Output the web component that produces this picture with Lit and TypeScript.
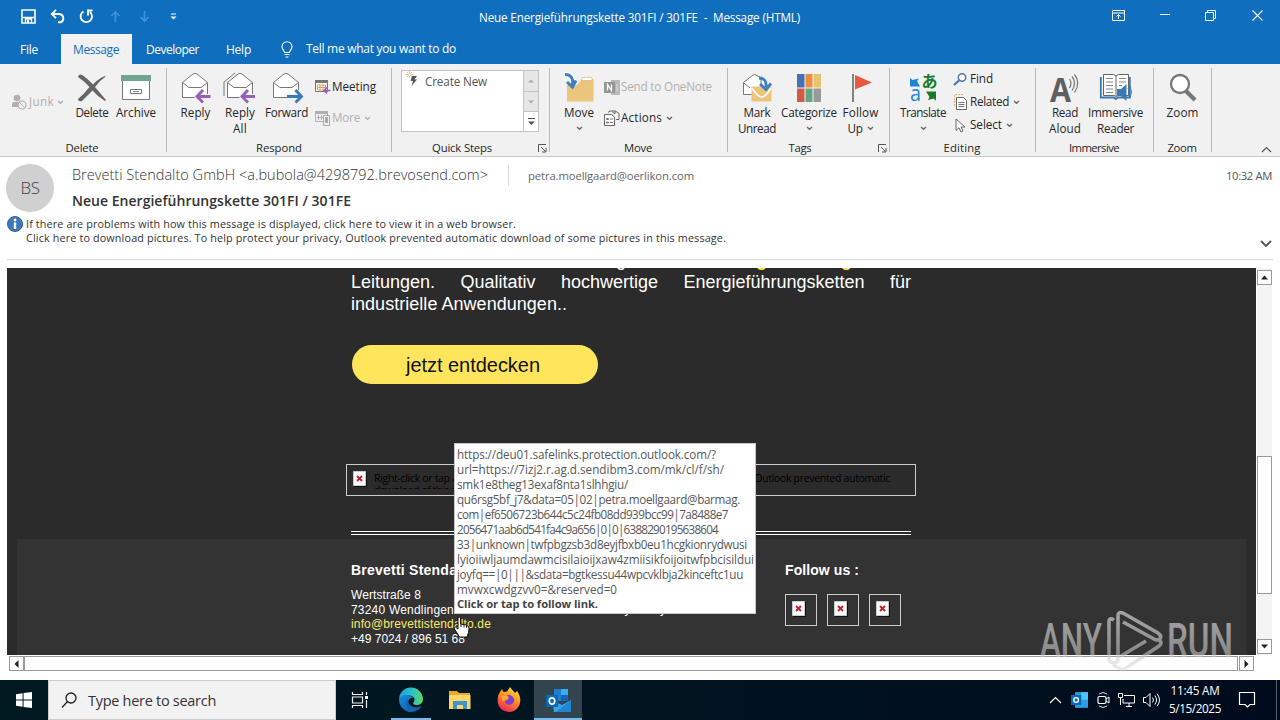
import {LitElement, css, html, svg} from 'lit';
import {customElement, property} from 'lit/decorators.js';

// Text that is tracked in or out so that it fills exactly `width` pixels.
@customElement('fit-text')
export class FitText extends LitElement {
  @property({type: Number}) width = 0;

  static styles = css`
    :host {
      display: inline-block;
      white-space: pre;
      text-align: left;
    }

    span {
      display: inline-block;
    }
  `;

  updated() {
    const count = (this.textContent || '').length;
    const run = this.renderRoot.querySelector('span');
    this.style.letterSpacing = '0px';
    if (!run || !count || !this.width) return;
    const natural = run.getBoundingClientRect().width;
    this.style.letterSpacing = `${(this.width - natural) / count}px`;
    this.style.width = `${this.width}px`;
  }

  render() {
    return html`<span><slot></slot></span>`;
  }
}

const fit = (text: string, width: number) => html`<fit-text width=${width}>${text}</fit-text>`;

const icon = (w: number, h: number, body: unknown) =>
  html`<svg width=${w} height=${h} viewBox="0 0 ${w} ${h}" fill="none">${body}</svg>`;

const caret = html`<svg class="caret" width="7" height="5" viewBox="0 0 7 5" fill="none">
  <path d="M1 1l2.500 2.300L6 1" stroke="currentColor" stroke-width="1.300" />
</svg>`;

const launcher = icon(9, 9, svg`
  <path d="M8 .5H.5V8M3 3l4.500 4.500M8 4v4H4" stroke="#555" />`);

const openLetter = svg`
  <path d="M1.500 10.500L12 2q2-1.200 4 0l10.500 8.500V25.500h-25z" fill="#fff" stroke="#777" />
  <path d="M1.500 10.500L8 15.500h12l6.500-5" stroke="#777" />`;

const icons = {
  save: icon(15, 15, svg`
    <path d="M1 1h13v13H1z" stroke="#fff" stroke-width="1.600" />
    <path d="M2 8.500h11M4.500 14v-4h6v4" stroke="#fff" stroke-width="1.400" /><path d="M6 11h2v3H6z" fill="#fff" />`),
  undo: icon(16, 15, svg`
    <path d="M2 5h7.500a4.300 4.300 0 0 1 1 8.300H8M6 .8L1.800 5 6 9.200" stroke="#fff" stroke-width="1.900" />`),
  redo: icon(15, 15, svg`
    <path d="M4.500 2.500a5.700 5.700 0 1 0 6.500.6M13.500 1.500H9v5" stroke="#fff" stroke-width="1.900" />`),
  up: icon(11, 13, svg`<path d="M5.500 12V2M1.500 6l4-4 4 4" stroke="#3f92dd" stroke-width="1.700" />`),
  down: icon(11, 13, svg`<path d="M5.500 1v10M1.500 7l4 4 4-4" stroke="#3f92dd" stroke-width="1.700" />`),
  more: icon(7, 7, svg`<path d="M1 1h5" stroke="#fff" /><path d="M.5 3.500h6l-3 3z" fill="#fff" />`),
  ribbonMode: icon(13, 11, svg`
    <path d="M.5.5h12v10H.5zM.5 3h12M6.500 9V4.500M4.500 6.500l2-2 2 2" stroke="#fff" />`),
  minimize: icon(10, 3, svg`<path d="M0 .500h10" stroke="#fff" />`),
  restore: icon(11, 11, svg`<path d="M.5 2.500h8v8h-8zM2.500 2V.500h8v8H9" stroke="#fff" />`),
  close: icon(11, 11, svg`<path d="M.5.5l10 10M10.500.5l-10 10" stroke="#fff" stroke-width="1.100" />`),
  bulb: icon(12, 17, svg`
    <path d="M3.500 11.500c0-2-2.500-3-2.500-5.800a5 5 0 0 1 10 0c0 2.800-2.500 3.800-2.500 5.800zM3.500 13.500h5M4.500 16h3" stroke="#fff" stroke-width="1.100" />`),
  junk: icon(16, 16, svg`
    <circle cx="6" cy="4" r="3.300" fill="#b0b0b0" /><path d="M1 13V9.500Q1 8 3 8h5v5z" fill="#b0b0b0" />
    <circle cx="11" cy="11" r="4" fill="#f1f1f1" stroke="#b0b0b0" stroke-width="1.200" /><path d="M8.500 8.500l5 5" stroke="#b0b0b0" />`),
  remove: icon(30, 28, svg`
    <path d="M1 3Q2-1 6 1.500 12 6 16 10.500 22 4 28 2l.5.800Q22 7 18 13q5 6 11 13l-1 1Q21 23 15.500 16.500 10 22 5 27q-4 1-4-2Q7 20 12.500 13 7 7 1 3z" fill="#666" />`),
  archive: icon(30, 26, svg`
    <path d="M1.500 5h27v19.500h-27z" fill="#fff" stroke="#777" /><path d="M0 0h30v6H0z" fill="#6fa58e" />
    <path d="M9.500 14.500h11v4h-11z" stroke="#777" /><path d="M12 16.500h6" stroke="#999" />`),
  reply: icon(31, 31, svg`<g transform="translate(1 0)">${openLetter}
    <path d="M29 24.500H17M22 18l-6 6.500 6 6" stroke="#f1f1f1" stroke-width="5" /><path d="M29.500 24.500H16M22 18l-6 6.500 6 6" stroke="#9560b8" stroke-width="2.800" /></g>`),
  replyAll: icon(34, 31, svg`
    <path d="M1 24V10L12 1" stroke="#777" /><g transform="translate(3 0)">${openLetter}
    <path d="M28 24.500H17M22 18l-6 6.500 6 6" stroke="#f1f1f1" stroke-width="5" /><path d="M29 24.500H16M22 18l-6 6.500 6 6" stroke="#9560b8" stroke-width="2.800" /></g>`),
  forward: icon(31, 31, svg`<g transform="translate(1 0)">${openLetter}
    <path d="M15 24.500h12M23 18l6 6.500-6 6" stroke="#f1f1f1" stroke-width="5" /><path d="M15 24.500h14M23.500 18l6 6.500-6 6" stroke="#3a7ab9" stroke-width="2.800" /></g>`),
  meeting: icon(16, 14, svg`
    <path d="M.5 1.500h12v10H.5z" fill="#fff" stroke="#777" /><path d="M0 0h13v3H0z" fill="#777" />
    <path d="M2.500 5h8v5h-8zM5 5v5M8 5v5M2.500 7.500h8" stroke="#dda060" /><path d="M15.500 10.500H9M12 7.500l-3 3 3 3" stroke="#9560b8" stroke-width="1.700" />`),
  moreRespond: icon(16, 15, svg`
    <path d="M.5 1.500h12v9H.5zM3.500 4v5M6.500 4v5M2 6.500h7" stroke="#b0b0b0" /><path d="M0 0h13v3H0z" fill="#b0b0b0" />
    <path d="M8.500 4.500h6v10h-6z" fill="#f1f1f1" stroke="#aaa" /><path d="M10 6h3v6h-3z" fill="#aaa" />`),
  quick: icon(12, 15, svg`
    <path d="M6 5h5L8.500 8.500H11L5.500 15 7 10H4.500z" fill="#555" /><path d="M3.500 0v7M0 3.500h7M1 1l5 5M6 1L1 6" stroke="#e9b872" stroke-width=".9" /><circle cx="3.500" cy="3.500" r="1.200" fill="#fff" />`),
  move: icon(30, 30, svg`
    <path d="M3 12h10l5-6h11.500v22.500H3z" fill="#ecc57c" /><path d="M18 4.500h10v3H17z" fill="#fff" stroke="#d9b878" stroke-width=".7" />
    <path d="M1 1.500q9 0 8 11" stroke="#fff" stroke-width="5" /><path d="M1 1.500q9 0 7.500 11M3 9l5.500 5L12 7.500" stroke="#3e7fbf" stroke-width="3" />`),
  oneNote: icon(16, 15, svg`
    <path d="M7 0h9v15H7z" fill="#b9b9b9" /><path d="M0 2h11v11H0z" fill="#959595" />
    <path d="M3.500 10.500v-6l4 6v-6" stroke="#fff" stroke-width="1.300" /><path d="M13 4v7" stroke="#ddd" />`),
  actions: icon(16, 16, svg`
    <path d="M.5 4.500h7l3 2.500v8.500H.5z" fill="#fff" stroke="#666" /><path d="M2.500 8.500h2v1h-2zM2.500 12h2v1h-2zM6 9h3M6 12.500h3" stroke="#777" />
    <path d="M4 2.500L6 1h5.500l3.500 2.500v6h-3M8 1.500l3 2.500V1" stroke="#666" />`),
  markUnread: icon(29, 29, svg`
    <path d="M.5 9.500L10 2q1.500-1 3 0l5 3v16.500H.5z" fill="#fff" stroke="#777" /><path d="M1 10l6 5" stroke="#777" />
    <path d="M8.500 13.500h20V28.500h-20z" fill="#ecc57c" /><path d="M9 15q5 8 9 9t10-9" stroke="#fff" stroke-width="1.500" />
    <path d="M16 5q8 0 7 9M17 11l6 5.500 5-6" stroke="#3e7fbf" stroke-width="2.800" />`),
  categorize: icon(24, 28, svg`
    <path d="M0 0h7.500v13.500H0z" fill="#4472b4" /><path d="M8.500 0h7v13.500h-7z" fill="#ee8d3d" /><path d="M16.500 0H24v13.500h-7.500z" fill="#e8c470" />
    <path d="M0 14.500h7.500V28H0z" fill="#d25b44" /><path d="M8.500 14.500h7V28h-7z" fill="#63a587" /><path d="M16.500 14.500H24V28h-7.500z" fill="#999" />`),
  followUp: icon(21, 28, svg`
    <path d="M3 0v28" stroke="#777" stroke-width="1.800" /><path d="M5 1l17 7.500L5 15.500z" fill="#e9593f" />`),
  translate: icon(28, 29, svg`
    <path d="M1 5l2.500 2L10 5.500 8 8l3 5.500H1z" fill="#1c86d6" /><path d="M27 28l-2-2.500-6 1.500 1.500-3L17 18.500H27z" fill="#177a26" />
    <text class="latin" x="1" y="28" textLength="11" lengthAdjust="spacingAndGlyphs">a</text><text class="kana" x="12.500" y="14">あ</text>`),
  find: icon(14, 13, svg`<circle cx="9" cy="4.500" r="3.700" fill="#fff" stroke="#4a76ad" stroke-width="1.500" /><path d="M6 7.500L1 12" stroke="#4a76ad" stroke-width="2.200" />`),
  related: icon(13, 16, svg`
    <path d="M.5 12V.500h9" stroke="#e5ad6a" stroke-dasharray="2 1" /><path d="M2.500 3.500h7l3 3v9h-10z" fill="#fff" stroke="#666" />
    <path d="M4.500 8.500h6M4.500 10.500h6M4.500 12.500h6" stroke="#777" />`),
  select: icon(11, 15, svg`<path d="M1 1v11.500l3-2.700 2 4.200 2-1-2-4h4z" fill="#fff" stroke="#666" />`),
  readAloud: icon(30, 28, svg`
    <text class="letter" x="0" y="28" textLength="21" lengthAdjust="spacingAndGlyphs">A</text>
    <path d="M19.500 5q3 4 0 9M22 2.500q5 6 0 14M24.500 .5q6.500 8 0 18" stroke="#777" stroke-width="1.200" />`),
  reader: icon(32, 29, svg`
    <path d="M.8 4v20.500h13l2 1.500 2-1.500h12V4" stroke="#3c78b4" stroke-width="1.800" />
    <path d="M3.500 1.500h10L16 3l2.500-1.500h10v21H18l-2 1-2-1H3.500zM16 3v20" fill="#fff" stroke="#666" />
    <path d="M6 5.500h7M6 9h7M6 12.500h7M6 16h7M6 19.500h7M19 5.500h7M19 9h7M19 12.500h3" stroke="#888" />
    <path d="M17 16h4l5.500-5v17L21 23h-4z" fill="#3c78b4" /><path d="M28 15q2.500 4 0 8M30 13q3 6 0 12" stroke="#3c78b4" />`),
  zoom: icon(28, 28, svg`<circle cx="11" cy="10" r="9" fill="#fff" stroke="#777" stroke-width="2.300" /><path d="M17 17l9 9" stroke="#777" stroke-width="4.200" />`),
  info: icon(16, 16, svg`
    <circle cx="8" cy="8" r="7.500" fill="#3f78b8" stroke="#2f6199" /><path d="M8 6.500v6.500" stroke="#fff" stroke-width="2.400" /><circle cx="8" cy="4" r="1.400" fill="#fff" />`),
  brokenImage: icon(14, 16, svg`
    <path d="M1 1h13v15H1z" fill="#111" /><path d="M.5.5h12v14H.5z" fill="#fff" stroke="#ccc" /><path d="M4 5l5 5M9 5l-5 5" stroke="#c4202e" stroke-width="1.900" />`),
  hand: icon(17, 22, svg`
    <path d="M5 1.500q1.800-1.200 2.500.5v6q6 .5 8 2.500 1 1.500 0 6l-1.500 4.500H6.500L1.500 13q-1-2 .8-2L5 13z" fill="#fff" stroke="#111" />
    <path d="M8 8v3M11 9v2.500M13.500 9.800v2" stroke="#111" stroke-width=".9" />`),
  windows: icon(16, 16, svg`<path d="M0 2.300l6.600-1v6.300H0zM7.600 1.100L16 0v7.600H7.600zM0 8.500h6.600v6.300L0 13.800zM7.600 8.500H16V16l-8.400-1.100z" fill="#fff" />`),
  search: icon(16, 17, svg`<circle cx="10" cy="6" r="5" stroke="#222" stroke-width="1.300" /><path d="M6.500 9.500L1 15.500" stroke="#222" stroke-width="1.300" />`),
  taskView: icon(18, 16, svg`
    <path d="M1.500 0v2.500h10V0M1.500 16v-2.500h10V16M1.500 5h10v6h-10zM15.500 0v3M15.500 8v8" stroke="#eee" stroke-width="1.200" /><path d="M14 4h3v3h-3z" fill="#fff" />`),
  edge: html`<svg width="26" height="26" viewBox="0 0 26 26" fill="none">
    <defs>
      <linearGradient id="edge-a" x1="0" y1="0" x2="1" y2="0"><stop offset="0" stop-color="#1f9de0" /><stop offset=".6" stop-color="#2fc5c0" /><stop offset="1" stop-color="#62d65b" /></linearGradient>
      <linearGradient id="edge-b" x1="0" y1="0" x2="1" y2="1"><stop offset="0" stop-color="#1b8fd8" /><stop offset="1" stop-color="#0d4f9d" /></linearGradient>
    </defs>
    <path d="M1 13A12 12 0 0 1 25 12c0 4-3 6-6.500 6-3 0-4-1.500-3-2.500 3-4-1-7-4-7C6 8 2 10 1 13z" fill="url(#edge-a)" />
    <path d="M1 13c1-4 5-5.500 8.500-5 3 0 5 1.500 5.500 3-5-1-8 8 .5 10.500 3 .8 6-.5 8-2A12.200 12.200 0 0 1 1 13z" fill="url(#edge-b)" />
    <path d="M10 12c-3 3-2 9 3 12 4 1 8-1.500 10.500-5-7 3.500-14 0-13.500-7z" fill="#1464b4" />
  </svg>`,
  folder: icon(22, 20, svg`
    <path d="M0 1h8l2 2h11v16H0z" fill="#e8a92e" /><path d="M1 5h20.500v14H0V6z" fill="#fcd668" />
    <path d="M4 19v-8h14v8h-4v-4H8v4z" fill="#3c93cf" />`),
  firefox: html`<svg width="24" height="26" viewBox="0 0 24 26" fill="none">
    <defs><linearGradient id="fx" x1=".8" y1="0" x2=".3" y2="1"><stop offset="0" stop-color="#ffe33d" /><stop offset=".45" stop-color="#ff9322" /><stop offset="1" stop-color="#f0245e" /></linearGradient></defs>
    <path d="M3 5l2-3 1.500 3L10 4.500 13 0c2 3 4 4 5 6l2-2c2 3 3.500 6 3.300 9.500A11.300 11.300 0 0 1 .700 14C.700 10 1 8 3 5z" fill="url(#fx)" />
    <path d="M9 9c4-3 9 1 8 5.500-1 4-8 4.500-9 0l4-2.500z" fill="#7a3fd0" /><path d="M4 9q4-2 8 1l-2 2q-3 0-4 3z" fill="#ffa92c" />
  </svg>`,
  outlook: html`<svg width="25" height="23" viewBox="0 0 25 23" fill="none">
    <path d="M8 0h14v12H8z" fill="#1c7fd0" /><path d="M15 0h7v6h-7z" fill="#35b0ee" /><path d="M15 6h7v6h-7z" fill="#1466b8" />
    <path d="M6 11l10 5 9-5v12H8z" fill="#38a5e2" /><path d="M25 11v12H10z" fill="#1f86d0" /><path d="M0 6h12v12H0z" fill="#0b67b8" />
    <ellipse cx="6" cy="12" rx="2.700" ry="3.100" stroke="#fff" stroke-width="1.700" />
  </svg>`,
  trayOutlook: html`<svg width="17" height="16" viewBox="0 0 25 23">
    <path d="M6 0h19v23H6z" fill="#2a9fe6" /><path d="M15 0h10v11H15z" fill="#50c4f5" /><path d="M0 4h15v15H0z" fill="#0b67b8" />
    <circle cx="7.500" cy="11.500" r="3.500" fill="none" stroke="#fff" stroke-width="2" />
  </svg>`,
  trayMeet: icon(14, 18, svg`
    <path d="M3 3q4-3 8 0M3 15q4 3 8 0" stroke="#ddd" /><rect x="2" y="5.500" width="8" height="7" rx="1.500" stroke="#fff" stroke-width="1.200" /><path d="M10 8l3-2v6l-3-2" stroke="#fff" />`),
  trayNetwork: icon(18, 14, svg`<path d="M6 2.500h10.500v7.500H5V6M.5.500h4v4h-4zM2.500 5v7M8 13.500h6M11 10v3" stroke="#fff" />`),
  trayVolume: icon(17, 14, svg`
    <path d="M.5 4.500H3l4-4v13l-4-4H.5z" stroke="#fff" /><path d="M9.500 4.500q2 2.500 0 5M11.800 2.500q3.500 4.500 0 9M14 .8q5 6.200 0 12.400" stroke="#fff" />`),
  trayChevron: icon(13, 8, svg`<path d="M1 7l5.500-5.500L12 7" stroke="#fff" stroke-width="1.200" />`),
  notice: icon(16, 17, svg`<path d="M.5.500h15v12H11L8.500 15 6 12.500H.5z" stroke="#fff" stroke-width="1.200" />`),
};

const tooltipLines: [string, number][] = [
  ['https://deu01.safelinks.protection.outlook.com/?', 259],
  ['url=https://7izj2.r.ag.d.sendibm3.com/mk/cl/f/sh/', 267],
  ['smk1e8theg13exaf8nta1slhhgiu/', 171],
  ['qu6rsg5bf_j7&data=05|02|petra.moellgaard@barmag.', 283],
  ['com|ef6506723b644c5c24fb08dd939bcc99|7a8488e7', 271],
  ['2056471aab6d541fa4c9a656|0|0|6388290195638604', 261],
  ['33|unknown|twfpbgzsb3d8eyjfbxb0eu1hcgkionrydwusi', 290],
  ['lyioiiwljaumdawmcisilaioijxaw4zmiisikfoijoitwfpbcisildui', 297],
  ['joyfq==|0|||&sdata=bgtkessu44wpcvklbja2kinceftc1uu', 286],
  ['mvwxcwdgzvv0=&reserved=0', 160],
];

@customElement('app-root')
export class AppRoot extends LitElement {
  static styles = css`
    :host {
      display: flex;
      flex-direction: column;
      position: relative;
      width: 1280px;
      height: 720px;
      overflow: hidden;
      background: #fff;
      color: #262626;
      font: 11.700px/16px 'Open Sans', 'Noto Sans', sans-serif;
    }

    * {
      box-sizing: border-box;
    }

    svg {
      display: block;
      flex: none;
      overflow: visible;
    }

    .titlebar {
      display: grid;
      grid-template-columns: 1fr auto 1fr;
      height: 34px;
      background: #106ebe;
      color: #fff;
    }

    .quick, .controls {
      display: flex;
      height: 32px;
    }

    .quick {
      padding-left: 14px;
    }

    .controls {
      justify-content: flex-end;
      height: 30px;
    }

    .quick > *, .controls > * {
      display: grid;
      place-items: center;
      width: 29px;
    }

    .controls > * {
      width: 46px;
    }

    .controls > :first-child, .controls > :nth-child(3) {
      padding-right: 2px;
    }

    .title {
      padding: 9px 1px 0 0;
    }

    .tabs {
      display: flex;
      align-items: center;
      height: 30px;
      background: #106ebe;
      color: #fff;
      font-size: 12px;
    }

    .tab {
      display: grid;
      place-items: center;
      height: 30px;
      padding-top: 1px;
    }

    .tab.file {
      width: 58px;
      margin-right: 3px;
    }

    .tab.active {
      width: 71px;
      padding-right: 1px;
      background: #f1f1f1;
      color: #106ebe;
    }

    .tab.developer {
      width: 81px;
    }

    .tab.help {
      width: 51px;
      margin-right: 17px;
    }

    .tell {
      display: flex;
      align-items: center;
      gap: 13px;
    }

    .ribbon {
      display: flex;
      position: relative;
      height: 93px;
      background: #f1f1f1;
      border-bottom: 1px solid #c8c8c8;
    }

    .group {
      display: flex;
      flex-direction: column;
      position: relative;
      padding-top: 4px;
    }

    .group::after {
      content: '';
      position: absolute;
      right: 0;
      top: 4px;
      bottom: 4px;
      width: 1px;
      background: #b8b8b8;
    }

    .items {
      display: flex;
      height: 72px;
    }

    .caption {
      display: flex;
      justify-content: center;
      height: 16px;
      font-size: 11.300px;
    }

    .launcher {
      position: absolute;
      right: 3px;
      bottom: 3px;
    }

    .g-delete { width: 167px; }
    .g-delete .caption { padding-right: 3px; }
    .g-respond { width: 225px; padding-left: 6px; }
    .g-respond .caption { padding-right: 7px; }
    .g-steps { width: 158px; padding-left: 9px; }
    .g-steps .caption { padding-right: 27px; }
    .g-move { width: 178px; padding-left: 6px; }
    .g-move .caption { padding-right: 8px; }
    .g-tags { width: 162px; padding-left: 6px; }
    .g-tags .caption { padding-right: 24px; }
    .g-editing { width: 146px; padding-left: 6px; }
    .g-editing .caption { padding-right: 8px; }
    .g-immersive { width: 118px; padding-left: 8px; }
    .g-immersive .caption { padding-right: 10px; }
    .g-zoom { width: 58px; }
    .g-zoom .caption { padding-right: 2px; }

    .big {
      display: flex;
      flex-direction: column;
      align-items: center;
      padding-top: 3px;
    }

    .big .pic {
      display: grid;
      place-items: center;
      height: 33px;
    }

    .big .line {
      display: flex;
      align-items: center;
      gap: 4px;
      height: 16px;
      white-space: nowrap;
    }

    .caret {
      color: #666;
    }

    .off, .off .caret {
      color: #b0b0b0;
    }

    .small {
      display: flex;
      align-items: center;
      gap: 3px;
      height: 16px;
    }

    .small fit-text {
      padding-bottom: 2px;
    }

    .small .caret {
      margin-left: 1px;
    }

    .junk {
      width: 70px;
      padding: 26px 0 0 11px;
    }

    .junk .small .caret {
      margin-left: 0;
    }

    .pair {
      display: flex;
      flex-direction: column;
      gap: 15px;
      padding: 11px 0 0 4px;
    }

    .pair .small {
      gap: 2px;
    }

    .pair .small .caret {
      margin-left: 2px;
    }

    .move-pair {
      padding-left: 2px;
    }

    .trio {
      display: flex;
      flex-direction: column;
      gap: 7px;
      padding: 3px 0 0 3px;
    }

    .slot {
      display: grid;
      place-items: center;
      width: 15px;
    }

    .trio .slot {
      width: 14px;
    }

    .gallery {
      display: flex;
      width: 138px;
      height: 62px;
      margin-top: 2px;
      border: 1px solid #c3c3c3;
      background: #fff;
      color: #555;
    }

    .gallery-item {
      display: flex;
      gap: 7px;
      width: 122px;
      padding-left: 4px;
    }

    .gallery-item fit-text {
      margin-top: 2px;
    }

    .gallery-scroll {
      display: grid;
      grid-template-rows: 21px 20px 19px;
      width: 15px;
      border-left: 1px solid #c3c3c3;
    }

    .gallery-scroll > * {
      display: grid;
      place-items: center;
      background: #e6e6e6;
      border-bottom: 1px solid #c3c3c3;
    }

    .gallery-scroll > :last-child {
      background: #fff;
      border: none;
    }

    .collapse {
      position: absolute;
      right: 8px;
      bottom: 3px;
    }

    .latin {
      font: 22px/1 'Open Sans', sans-serif;
      fill: #1c86d6;
    }

    .kana {
      font: 700 16px/1 'Noto Sans CJK JP', sans-serif;
      fill: #177a26;
    }

    .letter {
      font: 700 34px/1 'Open Sans', sans-serif;
      fill: #5f5f5f;
    }

    .header {
      display: flex;
      height: 103px;
      margin: 0 7px;
      border-bottom: 1px solid #dcdcdc;
    }

    .people {
      display: flex;
      flex-direction: column;
      width: 66px;
      margin-left: -1px;
    }

    .avatar {
      display: grid;
      place-items: center;
      width: 48px;
      height: 48px;
      margin: 7px 0 4px;
      border-radius: 50%;
      background: #d0d0d0;
      color: #444;
      font-size: 17px;
      font-weight: 300;
    }

    .people svg {
      margin-left: 1px;
    }

    .from {
      display: flex;
      align-items: center;
      height: 22px;
      margin-top: 7px;
      color: #666;
    }

    .sender {
      padding-bottom: 1px;
      font-size: 14.500px;
      font-weight: 300;
      color: #333;
    }

    .to {
      margin-left: 20px;
      padding-left: 19px;
      border-left: 1px solid #ddd;
      font-size: 11.300px;
      line-height: 20px;
      padding-top: 1px;
    }

    .subject {
      height: 20px;
      margin-top: 5px;
      font-size: 14px;
      line-height: 20px;
      font-weight: 600;
      color: #333;
    }

    .infobar {
      display: flex;
      flex-direction: column;
      margin: 6px 0 0 -46px;
      font-size: 10.800px;
      line-height: 14px;
      color: #333;
    }

    .when {
      display: flex;
      flex-direction: column;
      align-items: flex-end;
      justify-content: space-between;
      margin: 11px 1px 11px auto;
      font-size: 11.300px;
      color: #555;
    }

    .reading {
      display: grid;
      grid-template-columns: 1249px 16px;
      grid-template-rows: 387px 16px;
      column-gap: 1px;
      row-gap: 1px;
      height: 420px;
      padding: 8px 0 0 7px;
    }

    .mail {
      overflow: hidden;
      background: #2b2b2b;
      color: #fff;
      font: 12px/15px 'Liberation Sans', Arial, sans-serif;
    }

    .column {
      width: 560px;
      margin: 0 0 0 344px;
    }

    .copy {
      margin-top: -19px;
      font-size: 18px;
      line-height: 22px;
    }

    .copy div {
      display: flex;
      justify-content: space-between;
      height: 22px;
    }

    .copy b {
      color: #ffe657;
    }

    .cta {
      display: grid;
      place-items: center;
      width: 246px;
      height: 39px;
      margin: 30px 0 80px 1px;
      padding-right: 4px;
      border-radius: 20px;
      background: #ffe55b;
      color: #111;
      font-size: 20px;
      line-height: 24px;
    }

    .blocked {
      display: flex;
      gap: 7px;
      width: 570px;
      height: 32px;
      margin-left: -5px;
      padding: 6px 0 0 6px;
      border: 1px solid #ccc;
      color: #000;
      font: 10.500px/12px 'Open Sans', sans-serif;
    }

    .blocked div {
      height: 18px;
      overflow: hidden;
      padding-top: 1px;
    }

    .rules {
      height: 4px;
      margin: 35px 0 4px;
      border: 1px solid #fff;
      border-width: 1px 0;
    }

    .foot {
      display: flex;
      height: 130px;
      margin: 0 10px;
      padding: 22px 0 0 334px;
      background: #333;
    }

    .foot h4 {
      margin: 0 0 9px;
      font-size: 14px;
      line-height: 18px;
    }

    .contact {
      width: 240px;
    }

    .contact div, .policy div {
      height: 14.600px;
    }

    .mailto {
      color: #fbe96a;
    }

    .policy {
      width: 194px;
      padding-top: 41px;
    }

    .socials {
      display: flex;
      gap: 10px;
      padding-top: 6px;
    }

    .socials > * {
      width: 32px;
      height: 32px;
      padding: 6px;
      border: 1px solid #ccc;
    }

    .vbar, .hbar {
      display: flex;
      background: #f3f3f3;
    }

    .vbar {
      flex-direction: column;
      justify-content: space-between;
      width: 15px;
      padding: 2px 0 1px;
    }

    .hbar {
      gap: 1px;
      margin: 0 2px;
      background: #fff;
    }

    .arrow, .thumb {
      display: grid;
      place-items: center;
      border: 1px solid #9a9a9a;
      background: #fff;
    }

    .vbar .arrow {
      height: 15px;
    }

    .vbar .thumb {
      height: 138px;
      margin: 125px 0 0;
    }

    .hbar .arrow {
      width: 15px;
      height: 15px;
    }

    .hbar .thumb {
      flex: 1;
      height: 15px;
      margin-left: -1px;
    }

    .tooltip {
      position: absolute;
      left: 454px;
      top: 443px;
      display: flex;
      flex-direction: column;
      width: 302px;
      height: 171px;
      padding: 3px 0 0 2px;
      border: 1px solid #c8c8c8;
      background: #fff;
      color: #575757;
      font-size: 11.700px;
      line-height: 15px;
    }

    .tooltip b {
      color: #444;
      font-size: 11.200px;
      line-height: 14px;
    }

    .cursor {
      position: absolute;
      left: 453px;
      top: 616px;
    }

    .watermark {
      position: absolute;
      left: 1038px;
      top: 608px;
    }

    .watermark text {
      font: 500 48px Roboto, sans-serif;
    }

    .taskbar {
      display: flex;
      height: 40px;
      background: linear-gradient(90deg, #001a22, #001420 50%, #000b1d);
      color: #fff;
    }

    .cell {
      display: grid;
      place-items: center;
      width: 48px;
    }

    .running {
      width: 40px;
      margin: 0 5px 0 7px;
      padding-top: 2px;
      border-bottom: 2px solid #76b9ed;
    }

    .current {
      background: #34444e;
      padding-top: 2px;
      border-bottom: 2px solid #76b9ed;
    }

    .firefox-cell {
      width: 50px;
      padding-right: 1px;
    }

    .searchbox {
      display: flex;
      align-items: center;
      gap: 11px;
      width: 288px;
      padding-left: 12px;
      background: #f2f2f2;
      border: 1px solid #ccc;
      color: #333;
      font-size: 14.500px;
      line-height: 20px;
    }

    .searchbox fit-text {
      padding-top: 1px;
    }

    .tray {
      display: flex;
      align-items: center;
      margin-left: auto;
    }

    .tray > * {
      display: grid;
      place-items: center;
      width: 24px;
    }

    .tray .clock {
      width: 64px;
      line-height: 18px;
      padding-bottom: 2px;
    }

    .tray .notice {
      width: 40px;
      margin-right: 9px;
    }

    .tray .edge-line {
      width: 1px;
      height: 40px;
      margin-right: 3px;
      background: #55606c;
    }
  `;

  big(pic: unknown, width: number, first: unknown, second: unknown = '') {
    return html`
      <div class="big" style="width:${width}px">
        <div class="pic">${pic}</div>
        <div class="line">${first}</div>
        <div class="line">${second}</div>
      </div>
    `;
  }

  small(pic: unknown, label: unknown, hasCaret = false, off = false) {
    return html`
      <div class="small ${off ? 'off' : ''}"><span class="slot">${pic}</span>${label}${hasCaret ? caret : ''}</div>
    `;
  }

  group(name: string, caption: unknown, items: unknown, hasLauncher = false) {
    return html`
      <div class="group ${name}">
        <div class="items">${items}</div>
        <div class="caption">${caption}</div>
        ${hasLauncher ? html`<div class="launcher">${launcher}</div>` : ''}
      </div>
    `;
  }

  renderRibbon() {
    return html`
      <div class="ribbon">
        ${this.group('g-delete', fit('Delete', 33), html`
          <div class="junk">${this.small(icons.junk, fit('Junk', 25), true, true)}</div>
          ${this.big(icons.remove, 44, fit('Delete', 33))}
          ${this.big(icons.archive, 44, fit('Archive', 40))}
        `)}
        ${this.group('g-respond', fit('Respond', 46), html`
          ${this.big(icons.reply, 45, fit('Reply', 30))}
          ${this.big(icons.replyAll, 44, fit('Reply', 30), fit('All', 14))}
          ${this.big(icons.forward, 49, fit('Forward', 43))}
          <div class="pair">
            ${this.small(icons.meeting, fit('Meeting', 44))}
            ${this.small(icons.moreRespond, fit('More', 28), true, true)}
          </div>
        `)}
        ${this.group('g-steps', fit('Quick Steps', 60), html`
          <div class="gallery">
            <div class="gallery-item">${icons.quick}${fit('Create New', 62)}</div>
            <div class="gallery-scroll">
              <span>${icon(7, 4, svg`<path d="M0 3.500h6L3 .5z" fill="#aaa" />`)}</span>
              <span>${icon(7, 4, svg`<path d="M0 .5h6l-3 3z" fill="#aaa" />`)}</span>
              <span>${icon(7, 8, svg`<path d="M0 .5h7" stroke="#555" /><path d="M0 3.500h7L3.500 7z" fill="#555" />`)}</span>
            </div>
          </div>
        `, true)}
        ${this.group('g-move', fit('Move', 28), html`
          ${this.big(icons.move, 46, fit('Move', 30), caret)}
          <div class="pair move-pair">
            ${this.small(icons.oneNote, fit('Send to OneNote', 91), false, true)}
            ${this.small(icons.actions, fit('Actions', 41), true)}
          </div>
        `)}
        ${this.group('g-tags', fit('Tags', 23), html`
          ${this.big(icons.markUnread, 46, fit('Mark', 27), fit('Unread', 38))}
          ${this.big(icons.categorize, 58, fit('Categorize', 56), caret)}
          ${this.big(icons.followUp, 45, fit('Follow', 36), html`${fit('Up', 15)}${caret}`)}
        `, true)}
        ${this.group('g-editing', fit('Editing', 37), html`
          ${this.big(icons.translate, 54, fit('Translate', 46), caret)}
          <div class="trio">
            ${this.small(icons.find, fit('Find', 23))}
            ${this.small(icons.related, fit('Related', 39), true)}
            ${this.small(icons.select, fit('Select', 32), true)}
          </div>
        `)}
        ${this.group('g-immersive', fit('Immersive', 50), html`
          ${this.big(icons.readAloud, 42, fit('Read', 26), fit('Aloud', 32))}
          ${this.big(icons.reader, 59, fit('Immersive', 55), fit('Reader', 37))}
        `)}
        ${this.group('g-zoom', fit('Zoom', 29), this.big(icons.zoom, 57, fit('Zoom', 32)))}
        <div class="collapse">${icon(11, 7, svg`<path d="M1 6l4.500-4.500L10 6" stroke="#555" stroke-width="1.200" />`)}</div>
      </div>
    `;
  }

  renderHeader() {
    return html`
      <div class="header">
        <div class="people">
          <div class="avatar">${fit('BS', 19)}</div>
          ${icons.info}
        </div>
        <div class="details">
          <div class="from">
            <span class="sender">${fit('Brevetti Stendalto GmbH <a.bubola@4298792.brevosend.com>', 416)}</span>
            <span class="to">${fit('petra.moellgaard@oerlikon.com', 166)}</span>
          </div>
          <div class="subject">${fit('Neue Energieführungskette 301FI / 301FE', 279)}</div>
          <div class="infobar">
            ${fit('If there are problems with how this message is displayed, click here to view it in a web browser.', 490)}
            ${fit('Click here to download pictures. To help protect your privacy, Outlook prevented automatic download of some pictures in this message.', 700)}
          </div>
        </div>
        <div class="when">
          ${fit('10:32 AM', 46)}
          ${icon(12, 8, svg`<path d="M1 1l5 5 5-5" stroke="#555" stroke-width="1.800" />`)}
        </div>
      </div>
    `;
  }

  renderMail() {
    return html`
      <div class="mail">
        <div class="column">
          <div class="copy">
            <div>${fit('Wir haben immer die beste Lösung', 275)}${fit('für diese', 70)}<b>${fit('Energieführungen', 158)}</b>${fit('und', 28)}</div>
            <div><span>Leitungen.</span><span>Qualitativ</span><span>hochwertige</span><span>Energieführungsketten</span><span>für</span></div>
            <div>${fit('industrielle Anwendungen..', 216)}</div>
          </div>
          <div class="cta">${fit('jetzt entdecken', 134)}</div>
          <div class="blocked">
            ${icons.brokenImage}
            <div>
              ${fit('Right-click or tap and hold here to download pictures. To help protect your privacy, Outlook prevented automatic', 516)}
              ${fit('download of this picture from the Internet.', 190)}
            </div>
          </div>
          <div class="rules"></div>
        </div>
        <div class="foot">
          <div class="contact">
            <h4>${fit('Brevetti Stendalto GmbH', 171)}</h4>
            <div>${fit('Wertstraße 8', 70)}</div>
            <div>${fit('73240 Wendlingen', 103)}</div>
            <div class="mailto">${fit('info@brevettistendalto.de', 140)}</div>
            <div>${fit('+49 7024 / 896 51 68', 114)}</div>
          </div>
          <div class="policy"><div>${fit('Privacy Policy', 75)}</div></div>
          <div>
            <h4>${fit('Follow us :', 74)}</h4>
            <div class="socials">${[0, 1, 2].map(() => html`<span>${icons.brokenImage}</span>`)}</div>
          </div>
        </div>
      </div>
    `;
  }

  renderTaskbar() {
    return html`
      <div class="taskbar">
        <div class="cell start">${icons.windows}</div>
        <div class="searchbox">${icons.search}${fit('Type here to search', 128)}</div>
        <div class="cell">${icons.taskView}</div>
        <div class="cell running">${icons.edge}</div>
        <div class="cell">${icons.folder}</div>
        <div class="cell firefox-cell">${icons.firefox}</div>
        <div class="cell current">${icons.outlook}</div>
        <div class="tray">
          <div>${icons.trayChevron}</div>
          <div>${icons.trayOutlook}</div>
          <div>${icons.trayMeet}</div>
          <div>${icons.trayNetwork}</div>
          <div>${icons.trayVolume}</div>
          <div class="clock">${fit('11:45 AM', 49)}${fit('5/15/2025', 52)}</div>
          <div class="notice">${icons.notice}</div>
          <div class="edge-line"></div>
        </div>
      </div>
    `;
  }

  render() {
    return html`
      <div class="titlebar">
        <div class="quick">
          <span>${icons.save}</span><span>${icons.undo}</span><span>${icons.redo}</span>
          <span>${icons.up}</span><span>${icons.down}</span><span>${icons.more}</span>
        </div>
        <div class="title">${fit('Neue Energieführungskette 301FI / 301FE  -  Message (HTML)', 321)}</div>
        <div class="controls">
          <span>${icons.ribbonMode}</span><span>${icons.minimize}</span><span>${icons.restore}</span><span>${icons.close}</span>
        </div>
      </div>
      <div class="tabs">
        <div class="tab file">${fit('File', 18)}</div>
        <div class="tab active">${fit('Message', 46)}</div>
        <div class="tab developer">${fit('Developer', 53)}</div>
        <div class="tab help">${fit('Help', 25)}</div>
        <div class="tell">${icons.bulb}${fit('Tell me what you want to do', 150)}</div>
      </div>
      ${this.renderRibbon()}
      ${this.renderHeader()}
      <div class="reading">
        ${this.renderMail()}
        <div class="vbar">
          <span class="arrow">${icon(8, 5, svg`<path d="M0 4.500h7L3.500.5z" fill="#222" />`)}</span>
          <span class="thumb"></span>
          <span class="arrow">${icon(8, 5, svg`<path d="M0 .5h7L3.500 4.500z" fill="#222" />`)}</span>
        </div>
        <div class="hbar">
          <span class="arrow">${icon(5, 8, svg`<path d="M4.500 0v8L.5 4z" fill="#222" />`)}</span>
          <span class="thumb"></span>
          <span class="arrow">${icon(5, 8, svg`<path d="M.5 0v8l4-4z" fill="#222" />`)}</span>
        </div>
      </div>
      ${this.renderTaskbar()}
      <div class="tooltip">
        ${tooltipLines.map(([line, width]) => fit(line, width))}
        <b>${fit('Click or tap to follow link.', 141)}</b>
      </div>
      <div class="cursor">${icons.hand}</div>
      <svg class="watermark" width="200" height="66" viewBox="0 0 200 66" fill="none">
        <defs>
          <linearGradient id="fade" gradientUnits="userSpaceOnUse" x1="0" y1="10" x2="0" y2="62">
            <stop offset="0" stop-color="#b4b4b4" stop-opacity=".85" />
            <stop offset="1" stop-color="#d0d0d0" stop-opacity=".45" />
          </linearGradient>
        </defs>
        <text x="2" y="49" fill="url(#fade)" textLength="62" lengthAdjust="spacingAndGlyphs">ANY</text>
        <text x="129" y="49" fill="url(#fade)" textLength="66" lengthAdjust="spacingAndGlyphs">RUN</text>
        <path d="M76 12q-5-3-5 2v36q0 4 4 5 5 0 5-4V8q0-5 5-3l35 20q4 3 2 6-3 2-6 0L85 14M83 48l25-15M75 57l10 5 36-24q4-3 0-6" stroke="url(#fade)" stroke-width="3.600" />
      </svg>
    `;
  }
}
